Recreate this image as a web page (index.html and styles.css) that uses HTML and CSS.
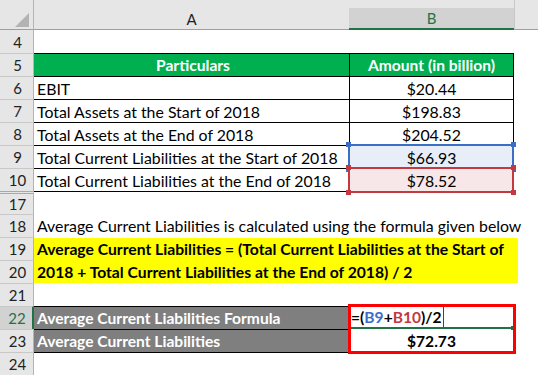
FILE: index.html
```html
<!DOCTYPE html>
<html>
<head>
<meta charset="utf-8">
<link rel="stylesheet" href="styles.css">
</head>
<body>
<div class="sheet">
  <div class="corner"><span class="tri"></span></div>
  <div class="colhead">A</div>
  <div class="colhead sel"><span>B</span></div>
  <div class="colhead rest"></div>

  <div class="rh first">4</div><div class="c"></div><div class="c"></div><div class="c"></div>

  <div class="rh">5</div><div class="c tA th center">Particulars</div><div class="c tB th">Amount (in billion)</div><div class="c"></div>
  <div class="rh">6</div><div class="c tA">EBIT</div><div class="c tB">$20.44</div><div class="c"></div>
  <div class="rh">7</div><div class="c tA">Total Assets at the Start of 2018</div><div class="c tB">$198.83</div><div class="c"></div>
  <div class="rh">8</div><div class="c tA">Total Assets at the End of 2018</div><div class="c tB">$204.52</div><div class="c"></div>
  <div class="rh">9</div><div class="c tA">Total Current Liabilities at the Start of 2018</div><div class="c tB ref blue">$66.93<span class="refbox"><i class="sq tl"></i><i class="sq tr"></i><i class="sq bl"></i><i class="sq br"></i></span></div><div class="c"></div>
  <div class="rh">10</div><div class="c tA">Total Current Liabilities at the End of 2018</div><div class="c tB ref red">$78.52<span class="refbox"><i class="sq tl"></i><i class="sq tr"></i><i class="sq bl"></i><i class="sq br"></i></span></div><div class="c"></div>

  <div class="rh hidden-above">17</div><div class="c closeA"></div><div class="c closeB"></div><div class="c"></div>

  <div class="rh">18</div><div class="c span3 pad">Average Current Liabilities is calculated using the formula given below</div>

  <div class="rh">19</div>
  <div class="note">
    <div class="yellow">
      <span class="line">Average Current Liabilities = (Total Current Liabilities at the Start of</span>
      <span class="line">2018 + Total Current Liabilities at the End of 2018) / 2</span>
    </div>
  </div>
  <div class="rh">20</div>

  <div class="rh">21</div><div class="c"></div><div class="c"></div><div class="c"></div>

  <div class="rh active">22</div>
  <div class="c gray">Average Current Liabilities Formula</div>
  <div class="result">
    <div class="b22"><span class="fx">=(<span class="r1">B9</span>+<span class="r2">B10</span>)/2</span><span class="caret"></span><i class="handle"></i></div>
    <div class="b23">$72.73</div>
  </div>
  <div class="c"></div>

  <div class="rh">23</div><div class="c gray">Average Current Liabilities</div><div class="c"></div>

  <div class="rh">24</div><div class="c closeA"></div><div class="c"></div><div class="c"></div>
</div>
</body>
</html>
```

FILE: styles.css
```css
html, body {
  margin: 0;
  padding: 0;
  background: #ffffff;
}

body {
  font-family: Lato, "Open Sans", "Liberation Sans", sans-serif;
  font-size: 15.85px;
  color: #000000;
}

.sheet {
  display: grid;
  grid-template-columns: 34px 315px 165px 24px;
  grid-template-rows: 30px;
  grid-auto-rows: 23px;
  width: 538px;
  height: 375px;
  overflow: hidden;
}

/* ---------- header row ---------- */
.corner {
  box-sizing: border-box;
  background: #e6e6e6;
  border-right: 1px solid #b4b4b4;
  border-bottom: 1px solid #9e9e9e;
  display: flex;
  align-items: flex-end;
  justify-content: flex-end;
  padding: 0 4px 2px 0;
}

.tri {
  width: 0;
  height: 0;
  border-left: 14px solid transparent;
  border-bottom: 14px solid #b3b3b3;
}

.colhead {
  box-sizing: border-box;
  background: #e6e6e6;
  border-bottom: 1px solid #9e9e9e;
  display: flex;
  align-items: center;
  justify-content: center;
  padding-top: 9px;
  color: #222222;
  font-size: 15px;
}

.colhead.sel {
  background: #e6e6e6;
  padding-top: 8px;
  border-bottom: none;
  align-items: stretch;
}

.colhead.sel span {
  flex: 1;
  display: flex;
  align-items: center;
  justify-content: center;
  background: #d2d2d2;
  border-bottom: 2px solid #217346;
  color: #217346;
}

.colhead.rest {
  border-left: 1px solid #c8c8c8;
}

/* ---------- row headers ---------- */
.rh {
  box-sizing: border-box;
  background: #e6e6e6;
  border-right: 1px solid #b4b4b4;
  border-top: 1px solid #c8c8c8;
  display: flex;
  align-items: center;
  justify-content: center;
  padding-left: 2px;
  color: #222222;
  font-size: 15px;
}

.rh.first {
  border-top: none;
}

.rh.hidden-above {
  border-top: 3px double #a8a8a8;
}

.rh.active {
  background: #d2d2d2;
  color: #217346;
  border-right: 2px solid #217346;
}

/* ---------- cells ---------- */
.c {
  box-sizing: border-box;
  display: flex;
  align-items: center;
  white-space: nowrap;
  min-width: 0;
}

.tA {
  border-top: 1px solid #000000;
  padding-left: 3px;
}

.tB {
  border-top: 1px solid #000000;
  border-left: 1px solid #000000;
  border-right: 1px solid #000000;
  justify-content: center;
}

.center {
  justify-content: center;
}

.th {
  background: #00b050;
  color: #ffffff;
  font-weight: 700;
  font-size: 15.6px;
}

.closeA {
  border-top: 1px solid #000000;
}

.closeB {
  border-top: 1px solid #000000;
}

.ref {
  position: relative;
}

.ref.blue {
  background: #e8eef8;
}

.ref.red {
  background: #f8e7e8;
}

.refbox {
  position: absolute;
  left: -2px;
  right: -1px;
  top: -2px;
  bottom: -2px;
  border: 2px solid currentColor;
}

.blue .refbox {
  color: #3b6fc6;
}

.red .refbox {
  color: #c3393f;
}

.sq {
  position: absolute;
  width: 5px;
  height: 5px;
  background: currentColor;
}

.sq.tl { left: -4px; top: -4px; }
.sq.tr { right: -4px; top: -4px; }
.sq.bl { left: -4px; bottom: -4px; }
.sq.br { right: -4px; bottom: -4px; }

.span3 {
  grid-column: span 3;
}

.pad {
  padding-left: 3px;
}

/* ---------- formula note ---------- */
.note {
  grid-column: span 3;
  grid-row: span 2;
  display: flex;
  align-items: stretch;
}

.yellow {
  width: 484px;
  margin-top: 1px;
  background: #ffff00;
  font-weight: 700;
  font-size: 15.7px;
  padding-left: 3px;
  box-sizing: border-box;
  display: flex;
  flex-direction: column;
  justify-content: center;
}

.yellow .line {
  display: block;
  white-space: nowrap;
  line-height: 23px;
}

/* ---------- result block ---------- */
.gray {
  background: #7f7f7f;
  color: #ffffff;
  font-weight: 700;
  font-size: 15.6px;
  border-top: 1px solid #000000;
  padding-left: 3px;
}

.result {
  grid-row: span 2;
  position: relative;
  display: flex;
  flex-direction: column;
  border-top: 1px solid #000000;
}

.result::after {
  content: "";
  position: absolute;
  left: -1px;
  right: -2px;
  top: -3px;
  bottom: -2px;
  border: 3px solid #ff0000;
}

.b22 {
  position: relative;
  height: 22px;
  box-sizing: border-box;
  border-bottom: 2px solid #217346;
  margin: 0 2px 0 1px;
  display: flex;
  align-items: center;
  font-weight: 700;
  font-size: 15.6px;
  white-space: nowrap;
}

.fx {
  padding-left: 1px;
}

.r1 {
  color: #3b6fc6;
}

.r2 {
  color: #c3393f;
}

.caret {
  width: 1px;
  height: 20px;
  background: #444444;
  margin-left: 1px;
}

.handle {
  position: absolute;
  right: -3px;
  bottom: -3px;
  width: 4px;
  height: 4px;
  background: #217346;
}

.b23 {
  flex: 1;
  display: flex;
  align-items: center;
  justify-content: center;
  font-weight: 700;
  font-size: 15.6px;
}
```
